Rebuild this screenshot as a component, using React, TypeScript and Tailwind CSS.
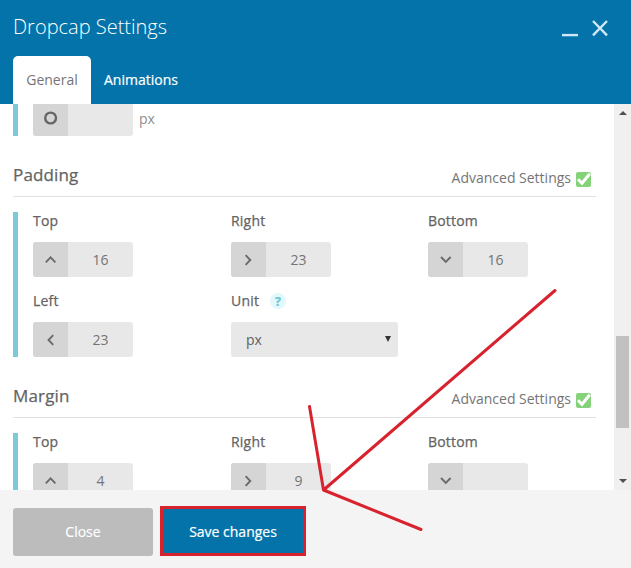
import React from 'react';

type Side = 'up' | 'right' | 'down' | 'left';

const SIDE_PATHS: Record<Side, string> = {
  up: 'M0.8 8.3 L5.6 3.4 L10.4 8.3',
  right: 'M2.6 1.2 L7.3 6 L2.6 10.8',
  down: 'M1 3 L5.8 7.9 L10.6 3',
  left: 'M8.2 1.2 L3.5 6 L8.2 10.8',
};

const SideIcon: React.FC<{ side: Side }> = ({ side }) => (
  <svg width="12" height="12" viewBox="0 0 12 12" fill="none" stroke="#6a6a6a" strokeWidth="1.9">
    <path d={SIDE_PATHS[side]} />
  </svg>
);

const NumberField: React.FC<{ label: string; side: Side; value?: string }> = ({ label, side, value }) => (
  <div>
    <div className="h-[30px] text-[14px] leading-[18px] font-medium tracking-[0.2px] text-[#636363] [-webkit-text-stroke:0.25px]">{label}</div>
    <div className="flex h-[35px] w-[100px] overflow-hidden rounded-[3px] bg-[#e8e8e8]">
      <div className="flex w-[35px] items-center justify-center bg-[#d5d5d5]">
        <SideIcon side={side} />
      </div>
      <div className="flex-1 text-center text-[14px] leading-[36px] text-[#747474]">{value}</div>
    </div>
  </div>
);

const SectionHeading: React.FC<{ title: string }> = ({ title }) => (
  <div className="mr-[18px] mb-[15px] flex h-[61px] shrink-0 items-start justify-between border-b border-[#e1e1e1] pt-[27px]">
    <h2 className="text-[17px] leading-6 font-medium tracking-[0.15px] text-[#636363] [-webkit-text-stroke:0.25px]">{title}</h2>
    <div className="mt-[3px] mr-[5px] flex items-start text-[14px] leading-6 text-[#757575]">
      <span>Advanced Settings</span>
      <svg className="mt-[6px] ml-[5px]" width="15" height="15" viewBox="0 0 15 15">
        <rect width="15" height="15" rx="2" fill="#85d27a" />
        <path d="M2 7.2 L6 11.3 L13.8 1.8" fill="none" stroke="#fff" strokeWidth="3" />
      </svg>
    </div>
  </div>
);

const FieldGroup: React.FC<{ children: React.ReactNode }> = ({ children }) => (
  <div className="grid h-[145px] shrink-0 grid-cols-[198px_197px_1fr] content-start gap-y-[15px] border-l-[5px] border-[#79cbdc] pl-[15px]">
    {children}
  </div>
);

export default function App() {
  return (
    <div className="relative flex h-[568px] w-[631px] flex-col overflow-hidden bg-white font-['Open_Sans','Noto_Sans',sans-serif]">
      <header className="flex h-[104px] shrink-0 flex-col justify-between bg-[#0473aa] pl-[13px]">
        <div className="flex items-start justify-between pt-[13px] pr-[23px]">
          <h1 className="text-[20px] leading-7 font-light text-white">Dropcap Settings</h1>
          <div className="flex gap-[14px] pt-[7px]">
            <svg width="16" height="17" viewBox="0 0 16 17" fill="none" stroke="#cfe8f5" strokeWidth="2.4">
              <path d="M0 15.1 H16" />
            </svg>
            <svg width="16" height="17" viewBox="0 0 16 17" fill="none" stroke="#cfe8f5" strokeWidth="2.4">
              <path d="M1 1 L15 15.4 M15 1 L1 15.4" />
            </svg>
          </div>
        </div>
        <nav className="flex h-12 text-[14px] leading-12">
          <button className="w-[78px] rounded-t-[5px] bg-white text-[#757575]">General</button>
          <button className="pl-[13px] font-medium text-white [-webkit-text-stroke:0.2px]">Animations</button>
        </nav>
      </header>

      <div className="flex h-[386px] shrink-0">
        <main className="flex flex-1 flex-col overflow-hidden pl-[13px]">
          <div className="flex h-8 shrink-0 border-l-[5px] border-[#79cbdc] pl-[15px]">
            <div className="flex w-[100px] overflow-hidden rounded-b-[3px] bg-[#e8e8e8]">
              <div className="flex w-[35px] justify-center bg-[#d5d5d5] pt-[7px]">
                <svg width="14" height="14" viewBox="0 0 14 14">
                  <circle cx="6.6" cy="7" r="5.4" fill="none" stroke="#666" strokeWidth="2.4" />
                </svg>
              </div>
            </div>
            <span className="ml-[6px] text-[14px] leading-[30px] text-[#8f8f8f]">px</span>
          </div>

          <SectionHeading title="Padding" />
          <FieldGroup>
            <NumberField label="Top" side="up" value="16" />
            <NumberField label="Right" side="right" value="23" />
            <NumberField label="Bottom" side="down" value="16" />
            <NumberField label="Left" side="left" value="23" />
            <div>
              <div className="flex h-[30px] items-start text-[14px] leading-[18px] font-medium tracking-[0.2px] text-[#636363] [-webkit-text-stroke:0.25px]">
                Unit
                <span className="mt-[1px] ml-[11px] h-4 w-4 rounded-full bg-[#e3f8fb] text-center text-[12.5px] leading-[17px] font-bold text-[#6cc5d6]">?</span>
              </div>
              <div className="flex h-[35px] w-[167px] items-center justify-between rounded-[3px] bg-[#e8e8e8] pr-[7px] pl-[15px] text-[14px] text-[#606060]">
                <span>px</span>
                <svg className="mb-[2px]" width="6" height="6" viewBox="0 0 6 6">
                  <path d="M0 0 H6 L3 6 Z" fill="#333" />
                </svg>
              </div>
            </div>
          </FieldGroup>

          <SectionHeading title="Margin" />
          <FieldGroup>
            <NumberField label="Top" side="up" value="4" />
            <NumberField label="Right" side="right" value="9" />
            <NumberField label="Bottom" side="down" />
          </FieldGroup>
        </main>

        {/* scrollbar */}
        <div className="flex w-[17px] flex-col items-center bg-[#f0f0f0]">
          <svg className="mt-[7px]" width="8" height="4" viewBox="0 0 8 4">
            <path d="M0 4 L4 0 L8 4 Z" fill="#505050" />
          </svg>
          <div className="mt-[221px] h-[92px] w-[13px] bg-[#c1c1c1]" />
          <svg className="mt-[51px]" width="8" height="4" viewBox="0 0 8 4">
            <path d="M0 0 L4 4 L8 0 Z" fill="#505050" />
          </svg>
        </div>
      </div>

      <footer className="flex flex-1 items-start gap-[7px] bg-[#f4f4f4] pt-[18px] pl-[13px] text-[14px] font-medium text-white [-webkit-text-stroke:0.2px]">
        <button className="h-12 w-[140px] rounded-[3px] bg-[#bcbcbc] pb-[2px]">Close</button>
        <button className="-mt-[2px] h-[50px] w-[146px] border-[3px] border-[#d8232f] bg-[#0473aa]">Save changes</button>
      </footer>

      {/* arrow pointing at the save button */}
      <svg className="pointer-events-none absolute inset-0" width="631" height="568" viewBox="0 0 631 568">
        <path
          d="M555 290.5 L323.5 490 M309.5 406.5 L323.5 490 L421 529.5"
          fill="none"
          stroke="#d8232f"
          strokeWidth="3"
          strokeLinecap="round"
          strokeLinejoin="round"
        />
      </svg>
    </div>
  );
}
